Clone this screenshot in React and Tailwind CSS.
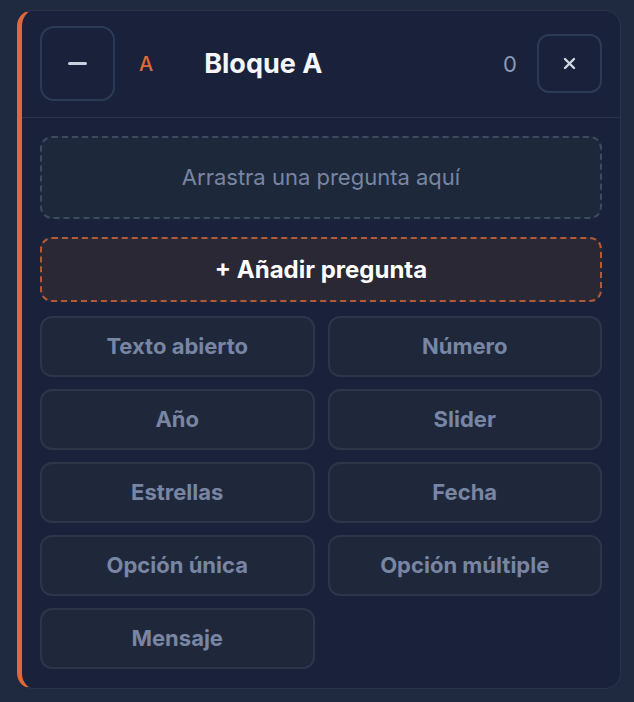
const TYPES = [
  'Texto abierto', 'Número',
  'Año', 'Slider',
  'Estrellas', 'Fecha',
  'Opción única', 'Opción múltiple',
  'Mensaje',
];

export default function App() {
  return (
    <div
      className="min-h-[702px] bg-[#1f2940] pt-[10px] pl-[17px] pr-[13px] pb-[14px]"
      style={{ fontFamily: 'Inter, "Noto Sans", sans-serif' }}
    >
      <div className="rounded-[16px] border border-[#2a3448] border-l-[5px] border-l-[#e0683a] bg-[#19223a]">
        {/* header */}
        <div className="flex items-center pl-[18px] pr-[18px] pt-[15px] pb-4 border-b border-[#2a3448]">
          <button className="w-[75px] h-[75px] rounded-[14px] border-2 border-[#2c3a56] flex items-center justify-center">
            <span className="block w-[19px] h-[3px] rounded bg-[#c9d1dc]" />
          </button>
          <span className="ml-[24px] text-[20px] font-medium text-[#e0683a] leading-none">A</span>
          <span className="ml-[51px] text-[27px] font-bold text-[#f4f6fa] leading-none">Bloque A</span>
          <span className="ml-auto text-[22px] text-[#8d9ab2] leading-none">0</span>
          <button className="ml-[20px] w-[65px] h-[59px] rounded-[12px] border-2 border-[#2c3a56] flex items-center justify-center">
            <svg width="13" height="13" viewBox="0 0 13 13" stroke="#d3d9e2" strokeWidth="2.4" strokeLinecap="round">
              <path d="M2 2L11 11M11 2L2 11" />
            </svg>
          </button>
        </div>

        {/* body */}
        <div className="pl-[18px] pr-[18px] pt-[18px] pb-[19px]">
          <div className="h-[83px] rounded-[12px] border-2 border-dashed border-[#3d4a62] bg-[#1e283b] flex items-center justify-center text-[22px] text-[#7786a2]">
            Arrastra una pregunta aquí
          </div>
          <div className="mt-[18px] h-[65px] rounded-[12px] border-2 border-dashed border-[#b35a36] bg-[#2a2835] flex items-center justify-center text-[24px] font-bold text-white">
            + Añadir pregunta
          </div>
          <div className="mt-[14px] grid grid-cols-2 gap-x-[13px] gap-y-3">
            {TYPES.map((t) => (
              <button
                key={t}
                className="h-[61px] rounded-[12px] border-2 border-[#2c3649] bg-[#1f283b] text-[22px] font-bold text-[#7886a3]"
              >
                {t}
              </button>
            ))}
          </div>
        </div>
      </div>
    </div>
  );
}
